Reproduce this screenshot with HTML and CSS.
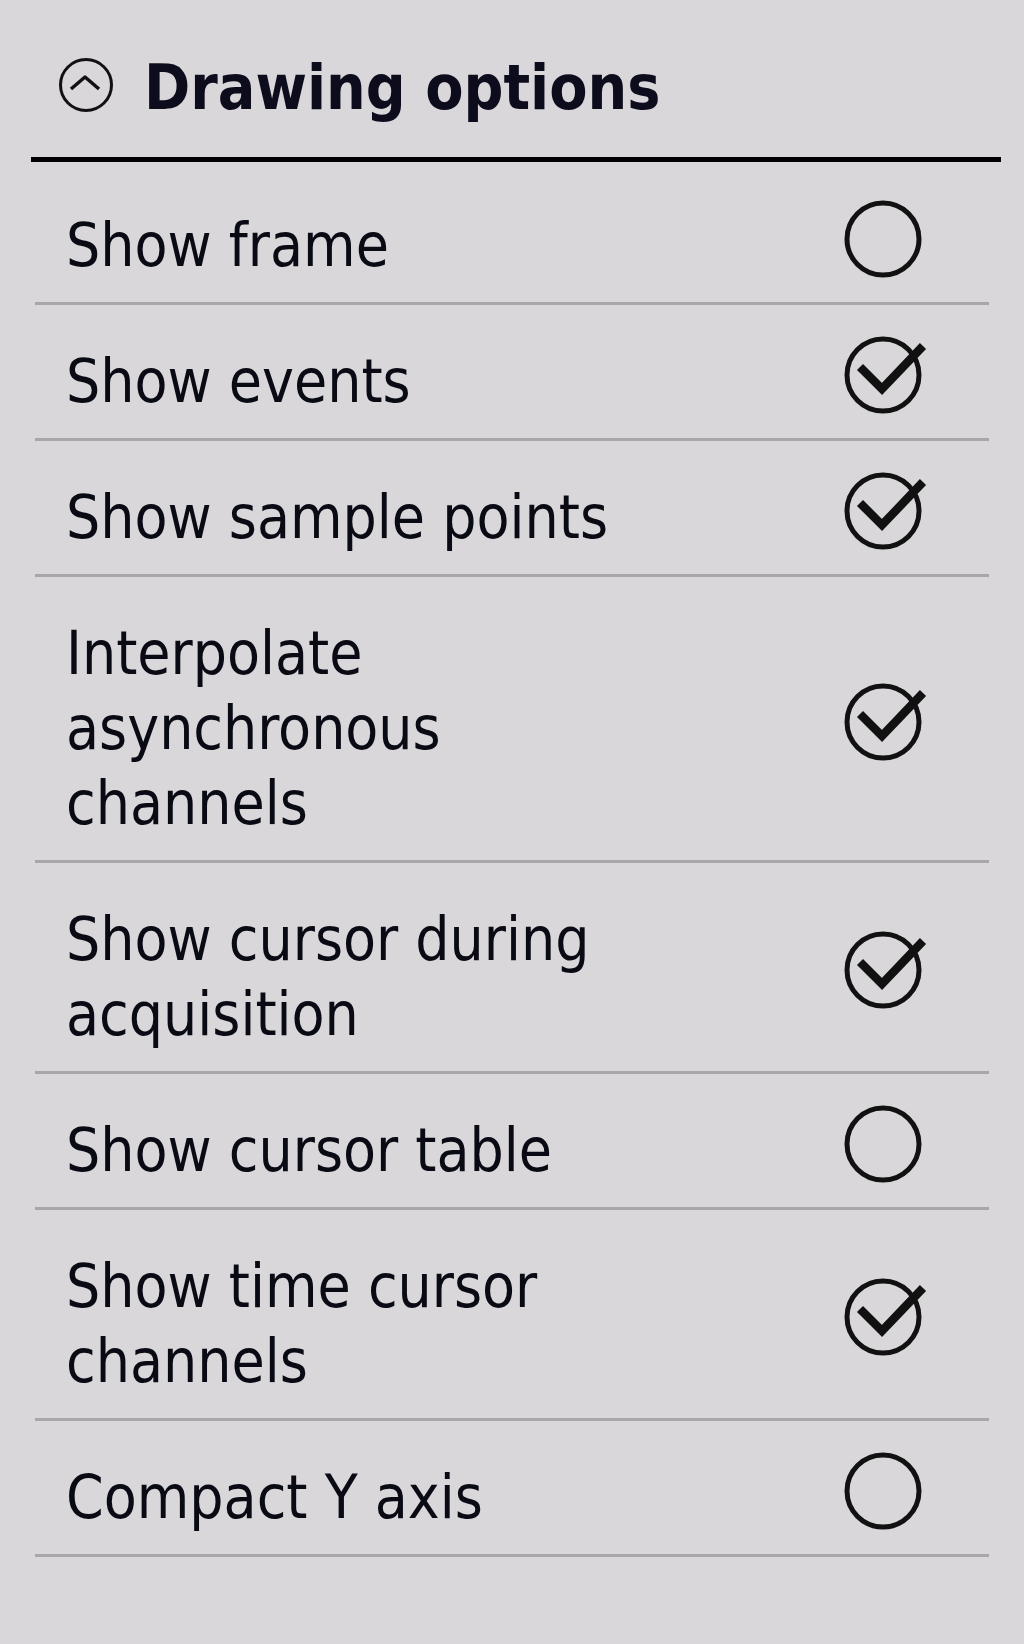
FILE: index.html
```html
<!DOCTYPE html>
<html lang="en">
<head>
    <meta charset="UTF-8">
    <meta name="viewport" content="width=device-width, initial-scale=1.0">
    <title>Drawing options</title>
    <link rel="stylesheet" href="styles.css">
</head>
<body>

<div class="panel">
    <div class="panel-header">
        <svg class="collapse-icon" width="56" height="56" viewBox="0 0 56 56">
            <circle cx="28" cy="28" r="25.5" fill="none" stroke="#111" stroke-width="3"/>
            <polyline points="13,32 27,20 41,32" fill="none" stroke="#111" stroke-width="3.5" stroke-linejoin="round"/>
        </svg>
        <h2>Drawing options</h2>
    </div>

    <ul class="options">
        <li class="option">
            <span class="label">Show frame</span>
            <svg class="toggle" width="80" height="80" viewBox="0 0 80 80"><circle cx="40" cy="40" r="36" fill="none" stroke="#111" stroke-width="5"/></svg>
        </li>
        <li class="option">
            <span class="label">Show events</span>
            <svg class="toggle" width="80" height="80" viewBox="0 0 80 80"><circle cx="40" cy="40" r="36" fill="none" stroke="#111" stroke-width="5"/><polyline points="17,32 39,54 80,11" fill="none" stroke="#111" stroke-width="8.5" stroke-linejoin="miter"/></svg>
        </li>
        <li class="option">
            <span class="label">Show sample points</span>
            <svg class="toggle" width="80" height="80" viewBox="0 0 80 80"><circle cx="40" cy="40" r="36" fill="none" stroke="#111" stroke-width="5"/><polyline points="17,32 39,54 80,11" fill="none" stroke="#111" stroke-width="8.5" stroke-linejoin="miter"/></svg>
        </li>
        <li class="option">
            <span class="label">Interpolate<br>asynchronous<br>channels</span>
            <svg class="toggle" width="80" height="80" viewBox="0 0 80 80"><circle cx="40" cy="40" r="36" fill="none" stroke="#111" stroke-width="5"/><polyline points="17,32 39,54 80,11" fill="none" stroke="#111" stroke-width="8.5" stroke-linejoin="miter"/></svg>
        </li>
        <li class="option">
            <span class="label">Show cursor during<br>acquisition</span>
            <svg class="toggle" width="80" height="80" viewBox="0 0 80 80"><circle cx="40" cy="40" r="36" fill="none" stroke="#111" stroke-width="5"/><polyline points="17,32 39,54 80,11" fill="none" stroke="#111" stroke-width="8.5" stroke-linejoin="miter"/></svg>
        </li>
        <li class="option">
            <span class="label">Show cursor table</span>
            <svg class="toggle" width="80" height="80" viewBox="0 0 80 80"><circle cx="40" cy="40" r="36" fill="none" stroke="#111" stroke-width="5"/></svg>
        </li>
        <li class="option">
            <span class="label">Show time cursor<br>channels</span>
            <svg class="toggle" width="80" height="80" viewBox="0 0 80 80"><circle cx="40" cy="40" r="36" fill="none" stroke="#111" stroke-width="5"/><polyline points="17,32 39,54 80,11" fill="none" stroke="#111" stroke-width="8.5" stroke-linejoin="miter"/></svg>
        </li>
        <li class="option">
            <span class="label">Compact Y axis</span>
            <svg class="toggle" width="80" height="80" viewBox="0 0 80 80"><circle cx="40" cy="40" r="36" fill="none" stroke="#111" stroke-width="5"/></svg>
        </li>
    </ul>
</div>

</body>
</html>
```

FILE: styles.css
```css
body {
    margin: 0;
    padding: 0;
    font-family: "DejaVu Sans Condensed", "DejaVu Sans", sans-serif;
    background-color: #d9d7da;
    color: #0a0a14;
    height: 100vh;
    overflow: hidden;
}

.panel {
    padding: 0 23px 0 31px;
}

.panel-header {
    display: flex;
    align-items: center;
    height: 157px;
    padding: 0 0 0 27px;
    border-bottom: 5px solid #000;
}

.collapse-icon {
    flex: none;
    margin: 0 30px 0 0;
    position: relative;
    top: 6px;
}

.panel-header h2 {
    margin: 0;
    font-size: 62px;
    font-weight: bold;
    color: #0c0c1c;
    position: relative;
    top: 9px;
}

.options {
    list-style: none;
    margin: 7px 12px 0 4px;
    padding: 0;
}

.option {
    display: flex;
    justify-content: space-between;
    padding: 0 66px 0 31px;
    border-bottom: 3px solid #a7a6a8;
}

.label {
    padding: 39px 0 19px;
    font-size: 60px;
    line-height: 75px;
}

.toggle {
    flex: none;
    align-self: center;
    margin-top: 6px;
    overflow: visible;
}
```
